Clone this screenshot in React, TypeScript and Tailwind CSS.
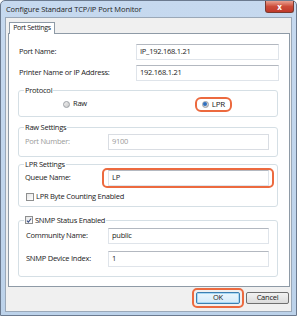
const font = { fontFamily: '"Open Sans", "Noto Sans", sans-serif' }

function TextBox({ value, w = 'w-[143px]', disabled = false }: { value: string; w?: string; disabled?: boolean }) {
  return (
    <div
      className={`${w} h-[16px] bg-white border flex items-center pl-[3px] text-[7.5px] ${
        disabled
          ? 'border-[#d9dde3] text-[#9a9a9a]'
          : 'border-[#dfe4ea] border-t-[#b3b8c0] text-[#1a1a1a]'
      }`}
    >
      {value}
    </div>
  )
}

function Radio({ checked }: { checked?: boolean }) {
  return (
    <span className="w-[7px] h-[7px] rounded-full border border-[#9a9ea4] bg-gradient-to-br from-[#f2f2f2] to-[#c8c8c8] flex items-center justify-center">
      {checked && <span className="w-[4px] h-[4px] rounded-full bg-[#2f6fbf]" />}
    </span>
  )
}

function Check({ checked }: { checked?: boolean }) {
  return (
    <span className="w-[8px] h-[8px] border border-[#8e8f8f] bg-gradient-to-br from-[#e6e6e6] to-white flex items-center justify-center">
      {checked && (
        <svg width="7" height="7" viewBox="0 0 7 7">
          <path d="M1 3.6 L2.8 5.4 L6 1.2" stroke="#3b4f86" strokeWidth="1.3" fill="none" />
        </svg>
      )}
    </span>
  )
}

function Group({ label, h, children, className = '' }: { label: React.ReactNode; h: string; children?: React.ReactNode; className?: string }) {
  return (
    <div className={`relative ml-[9px] w-[260px] ${h} border border-[#d5dfe5] rounded-[3px] ${className}`}>
      <div className="absolute -top-[7px] left-[5px] bg-white px-[1px] leading-[12px] flex items-center gap-[2px]">
        {label}
      </div>
      {children}
    </div>
  )
}

export default function App() {
  return (
    <div className="w-[298px] h-[318px] bg-white" style={font}>
      <div className="w-[297px] h-[316px] border border-[#6b7a8f] rounded-t-[5px] bg-gradient-to-b from-[#c6d9ef] to-[#bcd2ea] flex flex-col">
        <div className="h-[16px] flex items-start justify-between">
          <div className="pl-[5px] pt-[2px] text-[7.5px] tracking-[-0.1px] text-[#1e1e1e] leading-[12px]">
            Configure Standard TCP/IP Port Monitor
          </div>
          <div className="mr-[2px] w-[29px] h-[12px] rounded-b-[3px] border border-[#7a3a30] border-t-0 bg-gradient-to-b from-[#e8a091] via-[#cc4b39] to-[#c0392b] flex items-center justify-center text-white text-[8px] font-bold leading-none">
            x
          </div>
        </div>
        <div className="mx-[4px] h-[295px] border border-[#9aa8b8] bg-[#f0f0f0] flex flex-col text-[7.5px] tracking-[-0.25px] text-[#1a1a1a]">
          <div className="pl-[2px] pt-[4px]">
            <div className="w-[46px] h-[12px] ml-[1px] border border-b-0 border-[#8e9aa6] bg-white whitespace-nowrap flex items-center justify-center text-[7px] tracking-[-0.3px] relative z-10 -mb-px">
              Port Settings
            </div>
            <div className="w-[282px] h-[254px] border border-[#8e9aa6] bg-white">
              <div className="mt-[10px] h-[16px] flex items-center justify-between pl-[10px] pr-[10px]">
                <span>Port Name:</span>
                <TextBox value="IP_192.168.1.21" />
              </div>
              <div className="mt-[5px] h-[16px] flex items-center justify-between pl-[10px] pr-[10px]">
                <span>Printer Name or IP Address:</span>
                <TextBox value="192.168.1.21" />
              </div>
              <Group label="Protocol" h="h-[27px]" className="mt-[9px]">
                <div className="h-full flex items-center pl-[44px] pt-[1px]">
                  <span className="flex items-center gap-[3px]">
                    <Radio />
                    <span>Raw</span>
                  </span>
                  <span className="ml-[108px] flex items-center gap-[3px] border-2 border-[#ec6a3f] rounded-[6px] px-[5px] h-[15px]">
                    <Radio checked />
                    <span className="text-[8px]">LPR</span>
                  </span>
                </div>
              </Group>
              <Group label="Raw Settings" h="h-[30px]" className="mt-[10px]">
                <div className="h-full flex items-center justify-between pl-[6px] pr-[8px]">
                  <span className="text-[#9a9a9a]">Port Number:</span>
                  <TextBox value="9100" w="w-[161px]" disabled />
                </div>
              </Group>
              <Group label="LPR Settings" h="h-[43px]" className="mt-[7px]">
                <div className="pt-[3px] pl-[6px] pr-[8px] flex items-center justify-between">
                  <span>Queue Name:</span>
                  <div className="-mr-[5px] border-2 border-[#ec6a3f] rounded-[5px] pl-[4px] pr-[3px]">
                    <TextBox value="LP" w="w-[161px]" />
                  </div>
                </div>
                <div className="mt-[3px] pl-[7px] flex items-center gap-[2px]">
                  <Check />
                  <span>LPR Byte Counting Enabled</span>
                </div>
              </Group>
              <Group
                label={
                  <>
                    <Check checked />
                    <span>SNMP Status Enabled</span>
                  </>
                }
                h="h-[57px]"
                className="mt-[13px]"
              >
                <div className="pt-[7px] pl-[7px] pr-[8px] flex items-center justify-between">
                  <span>Community Name:</span>
                  <TextBox value="public" w="w-[161px]" />
                </div>
                <div className="mt-[7px] pl-[7px] pr-[8px] flex items-center justify-between">
                  <span>SNMP Device Index:</span>
                  <TextBox value="1" w="w-[161px]" />
                </div>
              </Group>
            </div>
          </div>
          <div className="mt-[1px] flex justify-end items-center pr-[2px] gap-[2px]">
            <div className="border-2 border-[#ec6a3f] rounded-[5px] py-[2px] px-[2px]">
              <div className="w-[44px] h-[12px] border border-[#3c7fb1] rounded-[2px] bg-gradient-to-b from-[#eaf6fd] to-[#d4ebfa] flex items-center justify-center shadow-[inset_0_0_0_1px_#a7d8f5]">
                OK
              </div>
            </div>
            <div className="w-[43px] h-[12px] border border-[#707070] rounded-[2px] bg-gradient-to-b from-[#f2f2f2] to-[#dcdcdc] flex items-center justify-center">
              Cancel
            </div>
          </div>
        </div>
      </div>
    </div>
  )
}
